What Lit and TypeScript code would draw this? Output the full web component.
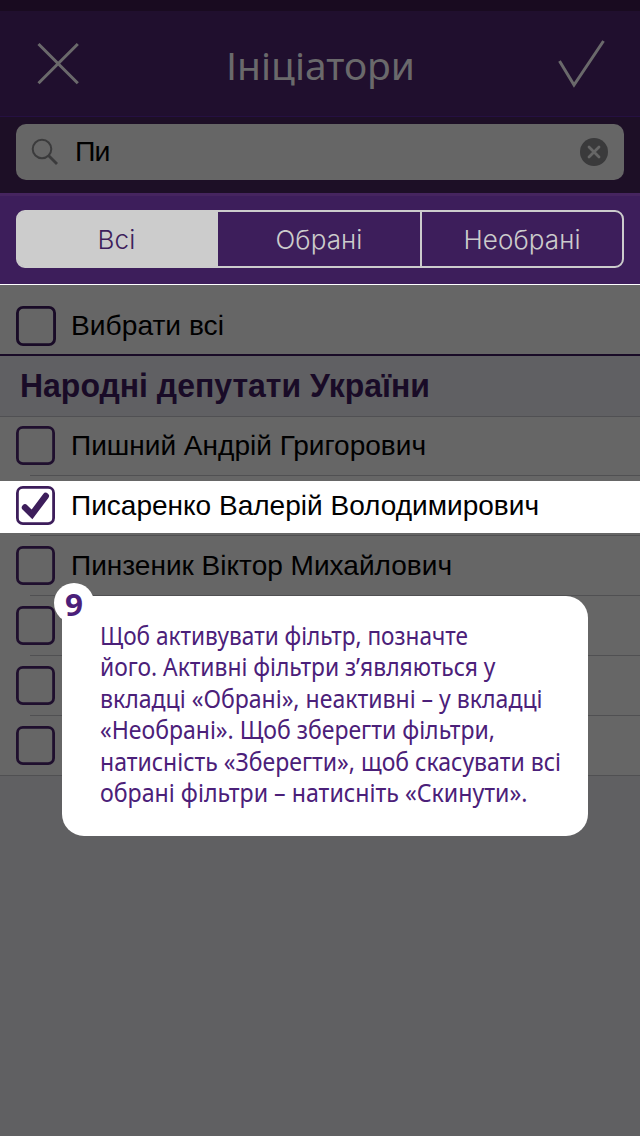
import { LitElement, html, css, svg } from "lit";
import { customElement, property } from "lit/decorators.js";

/** One line of text set to an exact measure. */
@customElement("fit-text")
class FitText extends LitElement {
  @property() text = "";
  @property({ type: Number }) measure = 100;
  static styles = css`
    :host { display: block; }
    svg { display: block; width: 100%; height: 100%; overflow: visible; fill: currentColor; }
  `;
  render() {
    return html`<svg>
      ${svg`<text x="0" y="1em" textLength=${this.measure} lengthAdjust="spacingAndGlyphs">${this.text}</text>`}
    </svg>`;
  }
}

@customElement("check-box")
class CheckBox extends LitElement {
  @property({ type: Boolean }) checked = false;
  @property({ type: Number }) size = 39;
  static styles = css`
    :host { display: block; }
    svg { display: block; }
  `;
  render() {
    return html`<svg width=${this.size} height=${this.size} viewBox="0 0 39 39" fill="none" stroke="currentColor">
      <rect x="1.4" y="1.4" width="36.2" height="36.2" rx="5.5" stroke-width="2.8" />
      ${this.checked
        ? svg`<path d="M9 21.5 L16 28.4 L29.8 10" stroke-width="6.4" stroke-linecap="round" stroke-linejoin="miter" />`
        : null}
    </svg>`;
  }
}

interface Person { name: string; width: number; checked?: boolean; }

const people: Person[] = [
  { name: "Пишний Андрій Григорович", width: 355 },
  { name: "Писаренко Валерій Володимирович", width: 468, checked: true },
  { name: "Пинзеник Віктор Михайлович", width: 381 },
  { name: "", width: 0 },
  { name: "", width: 0 },
  { name: "", width: 0 },
];

const tip: [string, number][] = [
  ["Щоб активувати фільтр, позначте", 368],
  ["його. Активні фільтри з’являються у", 395.5],
  ["вкладці «Обрані», неактивні – у вкладці", 442.5],
  ["«Необрані». Щоб зберегти фільтри,", 395],
  ["натисність «Зберегти», щоб скасувати всі", 461],
  ["обрані фільтри – натисніть «Скинути».", 427.5],
];

@customElement("app-root")
class AppRoot extends LitElement {
  static styles = css`
    :host { display: block; position: relative; width: 640px; height: 1136px; overflow: hidden;
      background: #606062; font-family: "Liberation Sans", Arial, sans-serif; color: #000; }
    * { box-sizing: border-box; }
    svg { display: block; }
    .status { height: 11px; background: #190b20; }
    .header { height: 106px; background: #200f2e; border-bottom: 1px solid #251042; display: flex;
      padding: 29px 35px 0 37px; color: #6a696b; }
    .title { width: 187px; height: 44px; font: 38px "Noto Sans", sans-serif; margin: 2px auto 0 147px; }
    .search { height: 76px; background: #1d0f26; padding: 7px 16px 0; }
    .field { height: 56px; border-radius: 10px; background: #666; display: flex; align-items: center;
      padding: 0 16px 0 15px; }
    .query { flex: 1; font: 28.5px "Liberation Sans", sans-serif; letter-spacing: -1px; margin-left: 16px;
      padding-bottom: 2px; }
    .filter { height: 92px; background: linear-gradient(#46255f 0 3px, #3d1e5b 3px); padding: 17px 16px 0;
      border-bottom: 1px solid #fff; }
    .tabs { height: 58px; border: 2px solid #ccc; border-radius: 9px; display: grid;
      grid-template-columns: 200px 202px 1fr; color: #ccc; font: 350 26px Inter, sans-serif; letter-spacing: 0.1px; }
    .tab { display: flex; justify-content: center; align-items: center; }
    .tab.on { background: #ccc; color: #3d1e5b; border-radius: 5px 0 0 5px; padding-right: 3px; }
    .tab + .tab + .tab { border-left: 2px solid #ccc; }
    .list { background: #666; }
    .all { height: 71px; display: flex; align-items: flex-start; padding: 21px 16px 0; gap: 15px;
      border-bottom: 2px solid #190b27; color: #190b27; }
    .label { color: #000; font-size: 28px; height: 34px; white-space: nowrap; margin-top: 1px; }
    .section { height: 61px; background: #606063; border-bottom: 1px solid #505053; padding: 8px 20px 0; margin: 0;
      color: #190b27; font: bold 33px "Liberation Sans", sans-serif; }
    .row { height: 60px; display: flex; flex-direction: column; color: #1f0f2e; }
    .cell { height: 59px; padding: 10px 16px 0; display: flex; align-items: flex-start; gap: 16px; }
    .cell.lit { height: 52px; margin: 5px 0 2px; padding-top: 5px; background: #fff; color: #3d1e5b; }
    .rule { height: 1px; margin-left: 30px; background: #505052; }
    .row:last-child .rule { margin-left: 0; }
    .rows { margin-top: -1px; }
    .tip { position: absolute; left: 62px; top: 596px; width: 526px; height: 240px; border-radius: 22px;
      background: #fff; color: #4b2079; padding: 24px 0 0 38px; font: 24.5px "Noto Sans", sans-serif; }
    .line { height: 31.4px; }
    .badge { position: absolute; left: -8px; top: -13px; width: 40px; height: 40px; border-radius: 50%;
      background: #fff; font: bold 31px "Noto Sans", sans-serif; padding: 1.5px 0 0 11px; }
  `;

  render() {
    return html`
      <div class="status"></div>
      <div class="header">
        <svg width="42" height="50" fill="none" stroke="currentColor" stroke-width="3">
          <path d="M1.5 4 L40.8 43.3 M40.8 4 L1.5 43.3" />
        </svg>
        <fit-text class="title" text="Ініціатори" .measure=${189}></fit-text>
        <svg width="48" height="50" fill="none" stroke="currentColor" stroke-width="3">
          <path d="M2.5 21 L17 45 L46.5 1" />
        </svg>
      </div>
      <div class="search">
        <div class="field">
          <svg width="28" height="28" fill="none" stroke="#3b3b3c" stroke-width="2">
            <circle cx="11" cy="11" r="9.3" /><path d="M17.5 17.5 L26 26" stroke-width="2.8" />
          </svg>
          <div class="query">Пи</div>
          <svg width="28" height="28" fill="none" stroke="#666" stroke-width="2.8" stroke-linecap="round">
            <circle cx="14" cy="14" r="14" fill="#3a3a3b" stroke="none" /><path d="M9 9 L19 19 M19 9 L9 19" />
          </svg>
        </div>
      </div>
      <div class="filter">
        <div class="tabs">
          <div class="tab on">Всі</div><div class="tab">Обрані</div><div class="tab">Необрані</div>
        </div>
      </div>
      <div class="list">
        <div class="all">
          <check-box .size=${40}></check-box>
          <fit-text class="label" text="Вибрати всі" .measure=${153}></fit-text>
        </div>
        <h2 class="section"><fit-text text="Народні депутати України" .measure=${410}></fit-text></h2>
        <div class="rows">
          ${people.map((p) => html`<div class="row">
            <div class="cell ${p.checked ? "lit" : ""}">
              <check-box ?checked=${p.checked}></check-box>
              ${p.name ? html`<fit-text class="label" text=${p.name} .measure=${p.width}></fit-text>` : null}
            </div>
            <div class="rule"></div>
          </div>`)}
        </div>
      </div>
      <div class="tip">
        ${tip.map(([t, w]) => html`<fit-text class="line" text=${t} .measure=${w}></fit-text>`)}
        <div class="badge">
          <fit-text text="9" .measure=${18}></fit-text>
        </div>
      </div>
    `;
  }
}
